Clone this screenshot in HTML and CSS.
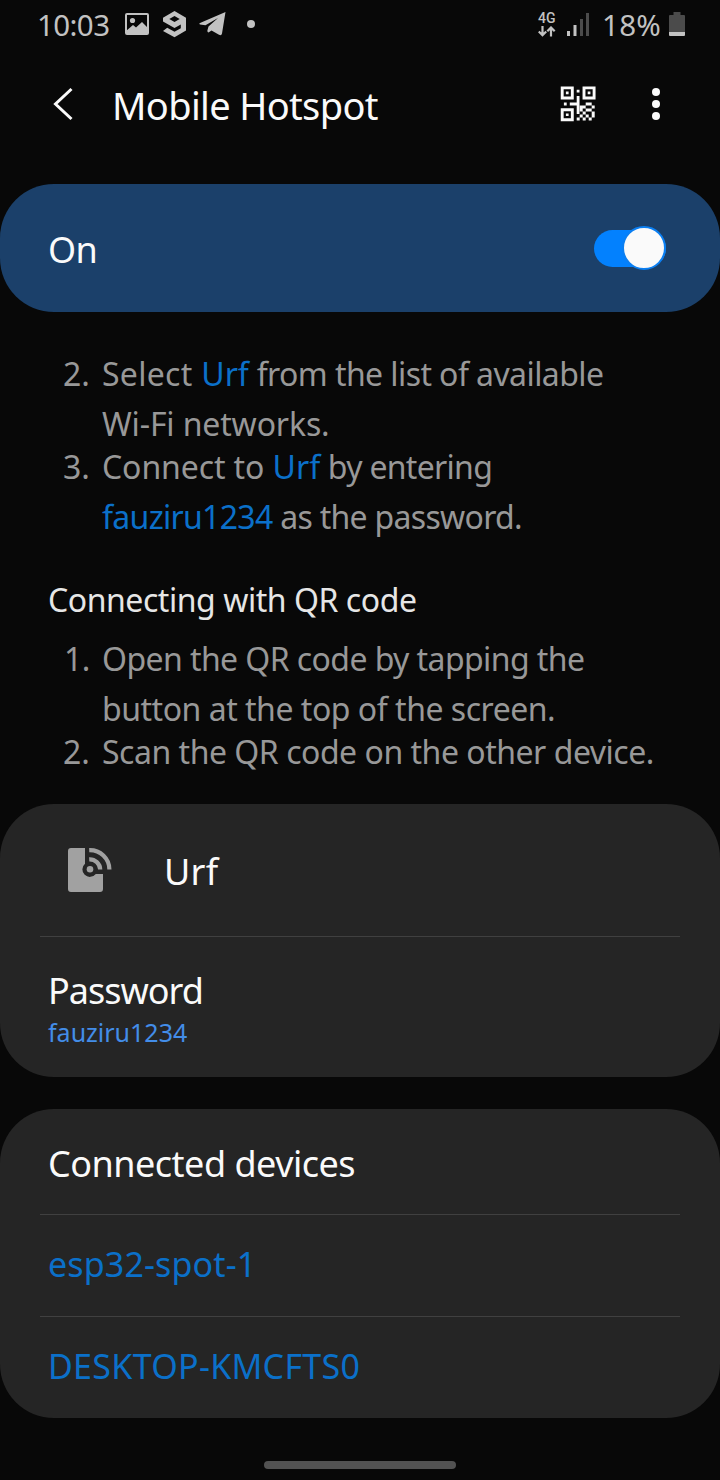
FILE: index.html
```html
<!DOCTYPE html>
<html lang="en">
<head>
<meta charset="utf-8">
<title>Mobile Hotspot</title>
<link rel="stylesheet" href="styles.css">
</head>
<body>
<div class="screen">
  <div class="status">
    <span class="clock">10:03</span>
    <svg class="ic-photo" width="24" height="22" viewBox="0 0 24 22"><path fill="none" stroke="currentColor" stroke-width="2" d="M2 1H22Q23 1 23 2V20Q23 21 22 21H2Q1 21 1 20V2Q1 1 2 1Z"/><circle cx="7.5" cy="7.5" r="2.6" fill="currentColor"/><path fill="currentColor" d="M1 18L8 12L11 14.500L17 9L23 15V21H1Z"/></svg>
    <svg class="ic-nine" width="24" height="27" viewBox="0 0 24 27"><path fill="currentColor" fill-rule="evenodd" d="M11.500 0L23 6.800V19.500L11.500 26.300L0 20L4.200 16.800L11.500 20.800L17.800 17.200V13.600L11.500 17L0 10.600V6.700ZM11.500 5L6.300 8L11.500 11L16.700 8Z"/></svg>
    <svg class="ic-plane" width="27" height="24" viewBox="0 0 27 24"><path fill="currentColor" d="M1 11L26.500 0L23 21.500Q22.500 24 20 22.700L12.500 18.500L9.500 20.500Q8 20.500 8.500 18L9.500 14.500L19 6L6.500 13.300L1 12.500Q-.5 11.800 1 11Z"/></svg>
    <i class="dot"></i>
    <div class="net">
      <b>4G</b>
      <svg width="18" height="11" viewBox="0 0 18 11"><path fill="none" stroke="currentColor" stroke-width="2.200" d="M4.500 0V9M.8 5.500L4.500 9.200L8.200 5.500M13 10.500V2M9.300 5.200L13 1.500L16.700 5.200"/></svg>
    </div>
    <svg class="ic-signal" width="23" height="23" viewBox="0 0 23 23"><path fill="currentColor" d="M0 18h3v5H0ZM6.500 12h3v11h-3Z"/><path fill="#4b4b4b" d="M13 6h3v17h-3ZM19 0h3v23h-3Z"/></svg>
    <span class="percent">18%</span>
    <svg class="ic-battery" width="16" height="24" viewBox="0 0 16 24"><path fill="#4b4b4b" d="M4.500 0H11.500V3H15Q16 3 16 4V20H0V4Q0 3 1 3H4.500Z"/><path fill="currentColor" d="M0 20H16V23Q16 24 15 24H1Q0 24 0 23Z"/></svg>
  </div>

  <header class="bar">
    <svg class="back" width="22" height="34" viewBox="0 0 22 34"><path fill="none" stroke="currentColor" stroke-width="3" d="M19.500 2L3.500 17L19.500 32"/></svg>
    <h1>Mobile Hotspot</h1>
    <svg class="qr" width="36" height="36" viewBox="0 0 36 36">
      <path fill="none" stroke="currentColor" stroke-width="2.900" d="M2.200 1.900h10.100v10.100h-10.100ZM24 1.900h10.100v10.100h-10.100ZM2.200 23.700h10.100v10.100h-10.100Z"/>
      <path fill="currentColor" d="M5.900 5.600h2.700v2.700h-2.700ZM27.700 5.600h2.700v2.700h-2.700ZM5.900 27.400h2.700v2.700h-2.700ZM16.700 3.800h2.800v2.800h-2.800ZM16.700 10h2.800v18h-2.800ZM9.800 16.600h9.500v2.800h-9.500ZM3.900 16.600h2.800v2.800h-2.800Z"/>
      <path fill="currentColor" d="M25.700 16.400h6v3h-6ZM19.700 19.400h6v3h-6ZM31.700 19.400h3v3h-3ZM19.700 22.400h3v3h-3ZM25.700 22.400h6v3h-6ZM22.700 25.400h3v3h-3ZM31.700 25.400h3v6h-3ZM19.700 28.400h3v3h-3ZM25.700 28.400h3v3h-3ZM16.700 31.400h3v3h-3ZM22.700 31.400h3v3h-3ZM28.700 31.400h3v3h-3Z"/>
    </svg>
    <svg class="more" width="8" height="32" viewBox="0 0 8 32"><g fill="currentColor"><circle cx="4" cy="4" r="4"/><circle cx="4" cy="16" r="4"/><circle cx="4" cy="28" r="4"/></g></svg>
  </header>

  <section class="power"><span>On</span><div class="toggle"><i></i></div></section>

  <section class="guide">
    <div class="step"><span class="num">2.</span><p><span class="wide">Select </span><em>Urf</em><span class="l4"> from the list of available</span><br><span class="l2">Wi-Fi networks.</span></p></div>
    <div class="step"><span class="num">3.</span><p><span class="near">Connect to </span><em>Urf</em><span class="l3"> by entering</span><br><span class="l3"><em>fauziru1234</em> as the password.</span></p></div>
    <h2>Connecting with QR code</h2>
    <div class="step"><span class="num one">1.</span><p><span class="l4">Open the QR code by tapping the</span><br><span class="l5">button at the top of the screen.</span></p></div>
    <div class="step"><span class="num">2.</span><p><span class="l5">Scan the QR code on the other device.</span></p></div>
  </section>

  <section class="card">
    <div class="network">
      <svg width="44" height="44" viewBox="0 0 44 44"><path fill="currentColor" d="M3 0H17V15.700A7.500 7.500 0 1 0 27.800 26H35V41Q35 44 32 44H3Q0 44 0 41V3Q0 0 3 0Z"/><circle cx="22" cy="21.300" r="3.300" fill="currentColor"/><path fill="none" stroke="currentColor" stroke-width="4.200" d="M21.200 11.300A10.500 10.500 0 0 1 32.200 21.500M21.200 2.200A19.500 19.500 0 0 1 41.400 21.500"/></svg>
      <span>Urf</span>
    </div>
    <div class="password"><span class="label">Password</span><span class="value">fauziru1234</span></div>
  </section>

  <section class="card devices">
    <div class="head">Connected devices</div>
    <div class="device">esp32-spot-1</div>
    <div class="device upper">DESKTOP-KMCFTS0</div>
  </section>

  <div class="home"></div>
</div>
</body>
</html>
```
FILE: styles.css
```css
* { box-sizing: border-box; }
body { margin: 0; background: #080808; color: #fafafa; font-family: "Noto Sans", sans-serif; }
h1, h2, p { margin: 0; font-weight: 400; }
em { font-style: normal; color: #0b70c9; }
svg { display: block; flex: none; }
.screen { width: 720px; height: 1480px; overflow: hidden; display: flex; flex-direction: column; }
.screen > * { flex: none; }

.status { height: 50px; padding: 0 35px 2px 37px; display: flex; align-items: center; color: #c2c2c2; font-size: 29.5px; line-height: 48px; white-space: nowrap; }
.clock { width: 88px; letter-spacing: -.6px; padding-top: 1px; }
.ic-nine { margin-left: 14px; }
.ic-plane { margin-left: 12px; }
.dot { width: 8px; height: 8px; border-radius: 50%; background: currentColor; margin-left: 21px; }
.net { margin-left: auto; width: 18px; }
.net b { display: block; font: 500 14px/14px Roboto, sans-serif; margin-bottom: 1px; }
.ic-signal { margin-left: 11px; }
.percent { width: 67px; margin-left: 12px; padding-top: 1px; letter-spacing: .3px; }

.bar { height: 134px; padding: 0 60px 26px 52px; display: flex; align-items: center; }
.bar h1 { margin-left: 38px; padding-top: 2px; font-size: 38px; line-height: 106px; letter-spacing: -.65px; width: 448px; }
.more { margin-left: auto; }

.power { height: 128px; padding: 0 54px 0 48px; border-radius: 54px; background: #1b406a; display: flex; align-items: center; justify-content: space-between; font-size: 36px; letter-spacing: -.6px; }
.power span { padding-top: 2px; }
.toggle { width: 72px; height: 37px; border-radius: 19px; background: #0381fe; display: flex; align-items: center; justify-content: flex-end; }
.toggle i { width: 44px; height: 44px; flex: none; border-radius: 50%; border: 2px solid #0b7ff2; background: #fafafa; }

.guide { height: 492px; padding: 37px 40px 0 48px; font-size: 32px; line-height: 50px; color: #989898; white-space: nowrap; }
.step { display: flex; }
.step + .step { margin-top: -7px; }
.num { width: 54px; padding-left: 15px; }
.one { padding-left: 16px; letter-spacing: -.5px; }
.guide h2 { margin: 33px 0 9px; font-size: 32px; line-height: 50px; letter-spacing: -.45px; color: #e6e6e6; }
.wide { letter-spacing: .3px; }
.near { letter-spacing: -.1px; }
.l2 { letter-spacing: -.14px; }
.l3 { letter-spacing: -.7px; }
.l4 { letter-spacing: -.58px; }
.l5 { letter-spacing: -.48px; }

.card { background: #252525; border-radius: 54px; padding: 0 40px; }
.network { height: 133px; padding: 0 28px; border-bottom: 1px solid #404040; display: flex; align-items: center; font-size: 36px; letter-spacing: .3px; }
.network svg { color: #a1a1a1; margin-top: -1px; margin-bottom: -1px; }
.network span { margin-left: 52px; padding-top: 3px; }
.password { height: 140px; padding: 29px 8px 0; display: flex; flex-direction: column; }
.label { font-size: 36px; line-height: 50px; letter-spacing: -1px; }
.value { font-size: 25px; line-height: 32px; color: #438de8; }
.devices { margin-top: 32px; height: 309px; }
.head { height: 105px; padding: 0 8px; font-size: 36px; line-height: 109px; letter-spacing: -.5px; }
.device { height: 102px; padding: 0 8px; border-top: 1px solid #404040; color: #0b70c9; font-size: 34px; line-height: 98px; letter-spacing: .15px; }
.upper { letter-spacing: .3px; }
.home { width: 192px; height: 8px; margin: 43px auto 0; border-radius: 4px; background: #525252; }
```
